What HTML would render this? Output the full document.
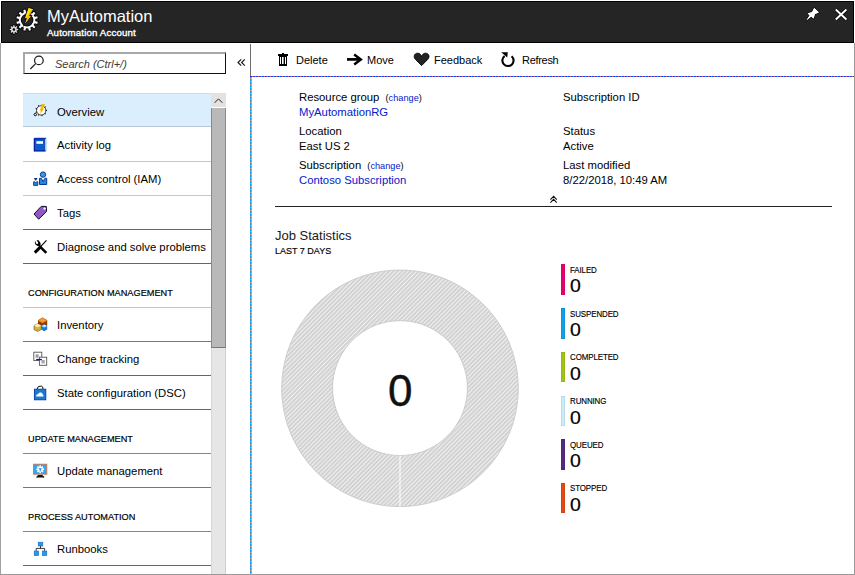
<!DOCTYPE html>
<html><head><meta charset="utf-8">
<style>
*{box-sizing:border-box;margin:0;padding:0}
html,body{width:855px;height:575px;overflow:hidden;background:#fff}
body{position:relative;font-family:"Liberation Sans",sans-serif;color:#000}
.a{position:absolute;white-space:nowrap}
#hdr{position:absolute;left:1px;top:1px;width:853px;height:42px;background:#252525;border:1px solid #000}
#lb{position:absolute;left:0;top:43px;width:1px;height:532px;background:#a0a0a0}
#rb{position:absolute;left:854px;top:43px;width:1px;height:532px;background:#9a9a9a}
#bb{position:absolute;left:0;top:574px;width:855px;height:1px;background:#9a9a9a}
.nav{position:absolute;left:23px;width:188px;height:35px;border-bottom:1px solid #c8c8c8}
.nav .t{position:absolute;left:34px;top:12px;font-size:11.3px}
.sec{position:absolute;left:28px;font-size:9.2px;-webkit-text-stroke:0.18px #000}
.lbl{font-size:11.3px}
.lnk{color:#0420cc}
.cmd{position:absolute;top:54px;font-size:11px}
.lg{position:absolute;left:560px;width:60px;height:31px}
.lg .bar{position:absolute;left:0.5px;top:0;width:4px;height:30.5px;box-shadow:inset 0 0 0 0.5px rgba(0,0,0,0.12)}
.lg .n{position:absolute;left:10px;top:0.5px;font-size:8.8px;letter-spacing:-0.1px;-webkit-text-stroke:0.15px #000;transform:scaleX(0.9);transform-origin:0 0}
.lg .v{position:absolute;left:9.5px;top:12px;font-size:18px;-webkit-text-stroke:0.2px #000;transform:scaleX(1.08);transform-origin:0 0}
</style></head><body>
<div id="hdr"></div>
<div id="lb"></div><div id="rb"></div><div id="bb"></div>

<div class="a" style="left:47px;top:7px;font-size:16.5px;color:#fff">MyAutomation</div>
<div class="a" style="left:47px;top:26.8px;font-size:9.7px;letter-spacing:0.15px;-webkit-text-stroke:0.35px #fff;color:#fff">Automation Account</div>

<div style="position:absolute;left:23px;top:52px;width:203px;height:22px;border:1px solid #111;border-top:2px solid #a8a8a8;border-left:2px solid #a8a8a8"></div>
<div class="a" style="left:55px;top:57.5px;font-size:11px;font-style:italic;color:#3a3a3a">Search (Ctrl+/)</div>

<div style="position:absolute;left:250px;top:44px;width:1px;height:32px;background:#6e6e6e"></div>

<div class="nav" style="top:93px;height:34px;background:#dbeefe;border-top:1px solid #bfe0fb;border-bottom-color:#b8c6d4"><div class="t">Overview</div></div>
<div class="nav" style="top:127px"><div class="t">Activity log</div></div>
<div class="nav" style="top:161px"><div class="t">Access control (IAM)</div></div>
<div class="nav" style="top:195px;border-bottom-color:#666"><div class="t">Tags</div></div>
<div class="nav" style="top:229px;border-bottom-color:#666"><div class="t">Diagnose and solve problems</div></div>
<div class="sec" style="top:288px">CONFIGURATION MANAGEMENT</div>
<div class="nav" style="top:307px;border-bottom-color:#777"><div class="t">Inventory</div></div>
<div style="position:absolute;left:23px;top:307px;width:188px;height:1px;background:#c4c4c4"></div>
<div class="nav" style="top:341px;border-bottom-color:#666"><div class="t">Change tracking</div></div>
<div class="nav" style="top:375px;border-bottom-color:#666"><div class="t">State configuration (DSC)</div></div>
<div class="sec" style="top:434px">UPDATE MANAGEMENT</div>
<div class="nav" style="top:453px;border-bottom-color:#777"><div class="t">Update management</div></div>
<div style="position:absolute;left:23px;top:453px;width:188px;height:1px;background:#888"></div>
<div class="sec" style="top:512px">PROCESS AUTOMATION</div>
<div class="nav" style="top:531px;border-bottom-color:#666"><div class="t">Runbooks</div></div>
<div style="position:absolute;left:23px;top:531px;width:188px;height:1px;background:#888"></div>

<div style="position:absolute;left:211px;top:93px;width:15px;height:481px;background:#e6e6e6;border-left:1px solid #d8d8d8;border-right:1px solid #d0d0d0"></div>
<div style="position:absolute;left:211px;top:93px;width:15px;height:15px;background:#e2e2e2"></div>
<div style="position:absolute;left:211px;top:107px;width:15px;height:1px;background:#fff"></div>
<div style="position:absolute;left:211px;top:108px;width:15px;height:240px;background:#b9b9b9;border-left:1px solid #8a8a8a;border-right:1px solid #8a8a8a;border-bottom:1px solid #777"></div>

<svg style="position:absolute;left:0;top:0" width="855" height="575"><line x1="250.8" y1="76" x2="250.8" y2="574" stroke="#f58a50" stroke-width="1.5"/><line x1="250.8" y1="76" x2="250.8" y2="574" stroke="#00a0ff" stroke-width="1.5" stroke-dasharray="2.2 0.8"/><line x1="250" y1="76.5" x2="854" y2="76.5" stroke="#e87048" stroke-width="1"/><line x1="250" y1="76.5" x2="854" y2="76.5" stroke="#1040f0" stroke-width="1" stroke-dasharray="2.2 0.8"/></svg>

<div class="cmd" style="left:296px">Delete</div>
<div class="cmd" style="left:367px">Move</div>
<div class="cmd" style="left:434px">Feedback</div>
<div class="cmd" style="left:522px;letter-spacing:-0.3px">Refresh</div>

<div class="a lbl" style="left:299px;top:91px">Resource group <span style="font-size:9.2px;margin-left:3px">(<span class="lnk">change</span>)</span></div>
<div class="a lbl lnk" style="left:299px;top:106px">MyAutomationRG</div>
<div class="a lbl" style="left:299px;top:125px">Location</div>
<div class="a lbl" style="left:299px;top:140px">East US 2</div>
<div class="a lbl" style="left:299px;top:159px">Subscription <span style="font-size:9.2px;margin-left:3px">(<span class="lnk">change</span>)</span></div>
<div class="a lbl lnk" style="left:299px;top:174px">Contoso Subscription</div>
<div class="a lbl" style="left:563px;top:91px">Subscription ID</div>
<div class="a lbl" style="left:563px;top:125px">Status</div>
<div class="a lbl" style="left:563px;top:140px">Active</div>
<div class="a lbl" style="left:563px;top:159px">Last modified</div>
<div class="a lbl" style="left:563px;top:174px">8/22/2018, 10:49 AM</div>
<div style="position:absolute;left:275px;top:206px;width:557px;height:1px;background:#222"></div>

<div class="a" style="left:275px;top:228px;font-size:13px;color:#1a1a1a">Job Statistics</div>
<div class="a" style="left:275px;top:246px;font-size:9px;-webkit-text-stroke:0.15px #000">LAST 7 DAYS</div>

<svg style="position:absolute;left:0;top:0" width="855" height="575">
<defs>
<pattern id="hatch" patternUnits="userSpaceOnUse" width="3" height="3" patternTransform="rotate(45)">
<rect width="3" height="3" fill="#d2d2d2"/><rect width="0.9" height="3" fill="#f4f4f4"/>
</pattern>
</defs>
<path fill="url(#hatch)" fill-rule="evenodd" stroke="#c4c4c4" stroke-width="0.8" d="M400,270 A118.3,118.3 0 1 1 399.99,270 Z M400,320.7 A67.4,67.4 0 1 0 400.01,320.7 Z"/>
<line x1="400" y1="455.5" x2="400" y2="506.5" stroke="#fff" stroke-width="1"/>
</svg>
<div class="a" style="left:388px;top:366px;font-size:44px;color:#111;-webkit-text-stroke:0.4px #111">0</div>

<div class="lg" style="top:264px"><div class="bar" style="background:#e8006f"></div><div class="n">FAILED</div><div class="v">0</div></div>
<div class="lg" style="top:308px"><div class="bar" style="background:#0fa0e8"></div><div class="n">SUSPENDED</div><div class="v">0</div></div>
<div class="lg" style="top:351.6px"><div class="bar" style="background:#a0c40f"></div><div class="n">COMPLETED</div><div class="v">0</div></div>
<div class="lg" style="top:395.5px"><div class="bar" style="background:#c8ecfa"></div><div class="n">RUNNING</div><div class="v">0</div></div>
<div class="lg" style="top:439px"><div class="bar" style="background:#552a7f"></div><div class="n">QUEUED</div><div class="v">0</div></div>
<div class="lg" style="top:482.5px"><div class="bar" style="background:#e24a12"></div><div class="n">STOPPED</div><div class="v">0</div></div>

<svg style="position:absolute;left:0;top:0" width="855" height="575">
<!-- header icon -->
<g fill="#000" stroke="#000" stroke-width="1.4"><rect x="-1.15" y="-10.90" width="2.30" height="3.50" transform="translate(27.1,20.1) rotate(15.0)"/><rect x="-1.15" y="-10.90" width="2.30" height="3.50" transform="translate(27.1,20.1) rotate(45.0)"/><rect x="-1.15" y="-10.90" width="2.30" height="3.50" transform="translate(27.1,20.1) rotate(75.0)"/><rect x="-1.15" y="-10.90" width="2.30" height="3.50" transform="translate(27.1,20.1) rotate(105.0)"/><rect x="-1.15" y="-10.90" width="2.30" height="3.50" transform="translate(27.1,20.1) rotate(135.0)"/><rect x="-1.15" y="-10.90" width="2.30" height="3.50" transform="translate(27.1,20.1) rotate(165.0)"/><rect x="-1.15" y="-10.90" width="2.30" height="3.50" transform="translate(27.1,20.1) rotate(195.0)"/><rect x="-1.15" y="-10.90" width="2.30" height="3.50" transform="translate(27.1,20.1) rotate(225.0)"/><rect x="-1.15" y="-10.90" width="2.30" height="3.50" transform="translate(27.1,20.1) rotate(255.0)"/><rect x="-1.15" y="-10.90" width="2.30" height="3.50" transform="translate(27.1,20.1) rotate(285.0)"/><rect x="-1.15" y="-10.90" width="2.30" height="3.50" transform="translate(27.1,20.1) rotate(315.0)"/><rect x="-1.15" y="-10.90" width="2.30" height="3.50" transform="translate(27.1,20.1) rotate(345.0)"/></g>
<circle cx="27.1" cy="20.1" r="7.3" fill="none" stroke="#000" stroke-width="3.6"/>
<circle cx="27.1" cy="20.1" r="7.3" fill="none" stroke="#fafafa" stroke-width="2"/>
<g fill="#fafafa"><rect x="-1.10" y="-10.80" width="2.20" height="3.40" transform="translate(27.1,20.1) rotate(15.0)"/><rect x="-1.10" y="-10.80" width="2.20" height="3.40" transform="translate(27.1,20.1) rotate(45.0)"/><rect x="-1.10" y="-10.80" width="2.20" height="3.40" transform="translate(27.1,20.1) rotate(75.0)"/><rect x="-1.10" y="-10.80" width="2.20" height="3.40" transform="translate(27.1,20.1) rotate(105.0)"/><rect x="-1.10" y="-10.80" width="2.20" height="3.40" transform="translate(27.1,20.1) rotate(135.0)"/><rect x="-1.10" y="-10.80" width="2.20" height="3.40" transform="translate(27.1,20.1) rotate(165.0)"/><rect x="-1.10" y="-10.80" width="2.20" height="3.40" transform="translate(27.1,20.1) rotate(195.0)"/><rect x="-1.10" y="-10.80" width="2.20" height="3.40" transform="translate(27.1,20.1) rotate(225.0)"/><rect x="-1.10" y="-10.80" width="2.20" height="3.40" transform="translate(27.1,20.1) rotate(255.0)"/><rect x="-1.10" y="-10.80" width="2.20" height="3.40" transform="translate(27.1,20.1) rotate(285.0)"/><rect x="-1.10" y="-10.80" width="2.20" height="3.40" transform="translate(27.1,20.1) rotate(315.0)"/><rect x="-1.10" y="-10.80" width="2.20" height="3.40" transform="translate(27.1,20.1) rotate(345.0)"/></g>
<g fill="#000" stroke="#000" stroke-width="1.2"><rect x="-0.75" y="-4.40" width="1.50" height="2.60" transform="translate(13.9,29.5) rotate(0.0)"/><rect x="-0.75" y="-4.40" width="1.50" height="2.60" transform="translate(13.9,29.5) rotate(45.0)"/><rect x="-0.75" y="-4.40" width="1.50" height="2.60" transform="translate(13.9,29.5) rotate(90.0)"/><rect x="-0.75" y="-4.40" width="1.50" height="2.60" transform="translate(13.9,29.5) rotate(135.0)"/><rect x="-0.75" y="-4.40" width="1.50" height="2.60" transform="translate(13.9,29.5) rotate(180.0)"/><rect x="-0.75" y="-4.40" width="1.50" height="2.60" transform="translate(13.9,29.5) rotate(225.0)"/><rect x="-0.75" y="-4.40" width="1.50" height="2.60" transform="translate(13.9,29.5) rotate(270.0)"/><rect x="-0.75" y="-4.40" width="1.50" height="2.60" transform="translate(13.9,29.5) rotate(315.0)"/></g>
<circle cx="13.9" cy="29.5" r="2.2" fill="#000" stroke="#000" stroke-width="2.4"/>
<circle cx="13.9" cy="29.5" r="2.1" fill="none" stroke="#d8d8d8" stroke-width="1.6"/>
<g fill="#d8d8d8"><rect x="-0.70" y="-4.30" width="1.40" height="2.50" transform="translate(13.9,29.5) rotate(0.0)"/><rect x="-0.70" y="-4.30" width="1.40" height="2.50" transform="translate(13.9,29.5) rotate(45.0)"/><rect x="-0.70" y="-4.30" width="1.40" height="2.50" transform="translate(13.9,29.5) rotate(90.0)"/><rect x="-0.70" y="-4.30" width="1.40" height="2.50" transform="translate(13.9,29.5) rotate(135.0)"/><rect x="-0.70" y="-4.30" width="1.40" height="2.50" transform="translate(13.9,29.5) rotate(180.0)"/><rect x="-0.70" y="-4.30" width="1.40" height="2.50" transform="translate(13.9,29.5) rotate(225.0)"/><rect x="-0.70" y="-4.30" width="1.40" height="2.50" transform="translate(13.9,29.5) rotate(270.0)"/><rect x="-0.70" y="-4.30" width="1.40" height="2.50" transform="translate(13.9,29.5) rotate(315.0)"/></g>
<polygon points="28.2,7.4 33.8,8.8 29.6,15.6 32,15.3 23.6,26.2 26.4,18.4 24.2,19" fill="#ffe600" stroke="#0a0a30" stroke-width="1" stroke-linejoin="miter"/>
<polygon points="31.2,9.8 32.4,10.2 28.4,16.6 30.4,16.4 25.4,23.2 27.8,17.2 26.6,17.4" fill="#f8b000"/>
<!-- pin -->
<polygon points="814.2,8 818.9,12.6 814.9,14 813.6,18.6 811.2,16.6 806.3,20.6 809.6,15.6 807.6,13.3 812,12.2" fill="#fff" stroke="#000" stroke-width="1.3" stroke-linejoin="round" paint-order="stroke"/>
<polygon points="814.2,8 818.9,12.6 814.9,14 813.6,18.6 811.2,16.6 806.3,20.6 809.6,15.6 807.6,13.3 812,12.2" fill="#fff"/>
<!-- close -->
<path d="M835.8,9.4 L846.4,19.4 M846.4,9.4 L835.8,19.4" stroke="#000" stroke-width="3.4"/>
<path d="M835.8,9.4 L846.4,19.4 M846.4,9.4 L835.8,19.4" stroke="#fff" stroke-width="2"/>
<!-- search -->
<circle cx="38.9" cy="60.4" r="4.3" fill="none" stroke="#1a1a1a" stroke-width="1.2"/>
<path d="M35.6,63.6 L30.4,69" stroke="#1a1a1a" stroke-width="1.2"/>
<!-- collapse « -->
<path d="M241.2,59.3 L238,62.5 L241.2,65.7 M244.8,59.3 L241.6,62.5 L244.8,65.7" fill="none" stroke="#1a1a1a" stroke-width="1.2"/>
<!-- scroll up arrow -->
<path d="M214.6,102.8 L218.5,98.9 L222.4,102.8" fill="none" stroke="#222" stroke-width="1"/>
<!-- overview icon -->
<circle cx="41.2" cy="110.4" r="4.7" fill="#fff" stroke="#333" stroke-width="0.9"/>
<g fill="#2a2a2a"><rect x="-0.55" y="-5.90" width="1.10" height="1.50" transform="translate(41.2,110.4) rotate(10.0)"/><rect x="-0.55" y="-5.90" width="1.10" height="1.50" transform="translate(41.2,110.4) rotate(50.0)"/><rect x="-0.55" y="-5.90" width="1.10" height="1.50" transform="translate(41.2,110.4) rotate(90.0)"/><rect x="-0.55" y="-5.90" width="1.10" height="1.50" transform="translate(41.2,110.4) rotate(130.0)"/><rect x="-0.55" y="-5.90" width="1.10" height="1.50" transform="translate(41.2,110.4) rotate(170.0)"/><rect x="-0.55" y="-5.90" width="1.10" height="1.50" transform="translate(41.2,110.4) rotate(210.0)"/><rect x="-0.55" y="-5.90" width="1.10" height="1.50" transform="translate(41.2,110.4) rotate(250.0)"/><rect x="-0.55" y="-5.90" width="1.10" height="1.50" transform="translate(41.2,110.4) rotate(290.0)"/><rect x="-0.55" y="-5.90" width="1.10" height="1.50" transform="translate(41.2,110.4) rotate(330.0)"/></g>
<polygon points="41.8,104.2 45.2,104.2 42.6,108.4 44.4,108.2 40,114.6 41,110.6 39.6,110.8" fill="#ffc000"/>
<polygon points="43.4,104.6 44.4,104.6 41.8,109 43,108.8 40.6,112.6 41.4,110" fill="#ff8a00"/>
<circle cx="35.3" cy="114.6" r="1.2" fill="none" stroke="#111" stroke-width="1"/>
<!-- activity log -->
<rect x="34.3" y="137.6" width="12" height="13.4" fill="#3aa0ff"/>
<rect x="34.3" y="138.8" width="10.8" height="12.2" fill="#0a5cc8" stroke="#0010a0" stroke-width="1.1"/>
<rect x="44.9" y="139" width="0.9" height="11.5" fill="#f5f0a0"/>
<rect x="36.4" y="141.2" width="6.6" height="2.6" fill="#fff"/>
<!-- IAM -->
<circle cx="43" cy="174.6" r="2.7" fill="#3a98dc" stroke="#0a3a98" stroke-width="1"/>
<path d="M39.5,178.3 L41.3,178.3 L43.1,181.6 L44.9,178.3 L46.7,178.3 L46.7,184.5 L39.5,184.5 Z" fill="#2a88d0" stroke="#0a3a98" stroke-width="1"/>
<path d="M34.4,178.5 L37,178.5 L35.7,180.3 Z" fill="#0a2a88" stroke="#0a2a88" stroke-width="0.9"/>
<path d="M33.6,181.8 L34.8,181.8 L35.7,183 L36.6,181.8 L37.8,181.8 L37.8,185.4 L33.6,185.4 Z" fill="#2a88d0" stroke="#0a3a98" stroke-width="0.9"/>
<!-- tag -->
<path d="M34,214 L41.2,206.4 L46.3,206.4 L46.6,211.4 L38.7,219.2 Z" fill="#9058c4" stroke="#1a0a30" stroke-width="1"/>
<circle cx="44.6" cy="208.6" r="1.2" fill="#fff"/>
<!-- diagnose -->
<path d="M40.3,246.8 L46.3,252.8" stroke="#000" stroke-width="2.6"/>
<path d="M35,240.6 Q33.8,245.8 39.6,246.4 L40.6,245.8 Q40.8,242.2 38.6,240.3 L36.5,240.3 L38.2,242.4 L37.8,244 L36.2,243.8 Z" fill="#000"/>
<path d="M46.5,240.4 L40.6,246.6" stroke="#000" stroke-width="1.1"/>
<path d="M41,246.4 L34.8,252.6" stroke="#000" stroke-width="2.9"/>
<!-- inventory -->
<path d="M38,320.5 L42.5,317.8 L47.2,320.5 L47.2,326 L42.5,328.5 L38,326 Z" fill="#8a3a10"/>
<path d="M38,320.5 L42.5,317.8 L47.2,320.5 L42.5,323 Z" fill="#f0a030" stroke="#d86010" stroke-width="0.6"/>
<path d="M34,325.5 L37.5,323.8 L41.3,325.5 L41.3,329.6 L37.5,331.4 L34,329.6 Z" fill="#d8b040" stroke="#6a4a10" stroke-width="0.6"/>
<path d="M34,325.5 L37.5,323.8 L41.3,325.5 L37.5,327.2 Z" fill="#fff4b0"/>
<path d="M41.3,326 L44.2,324.4 L47.2,326 L47.2,329.6 L44.2,331.2 L41.3,329.6 Z" fill="#1a78d8"/>
<path d="M41.3,326 L44.2,324.4 L47.2,326 L44.2,327.6 Z" fill="#c0ecff"/>
<!-- change tracking -->
<rect x="33.8" y="352.2" width="8" height="8.3" fill="#fff" stroke="#555" stroke-width="0.9"/>
<rect x="35.6" y="354.4" width="3" height="3.2" fill="#999"/>
<rect x="39.4" y="357.2" width="7.3" height="8.1" fill="#fff" stroke="#555" stroke-width="0.9"/>
<rect x="41.4" y="360" width="3.4" height="3.4" fill="#aaa"/>
<rect x="36.2" y="358.9" width="5.6" height="1.3" fill="#0010c0"/>
<!-- state config bag -->
<path d="M37.2,389 Q37.4,386.2 40,386.2 L41.8,386.2 Q43,386.4 43,389" fill="none" stroke="#111" stroke-width="1"/>
<rect x="34.4" y="389.2" width="11.4" height="10.6" fill="#1a7ad0" stroke="#0a3aa0" stroke-width="0.9"/>
<path d="M36.2,396.6 Q35.8,394 38,394.2 Q38.8,392 41,392.6 Q42.8,393 42.6,394.6 Q43.8,394.8 43.4,396.6 Z" fill="#fff"/>
<!-- update mgmt -->
<rect x="33.6" y="464.2" width="13.2" height="10" fill="#30a8ec" stroke="#d0704a" stroke-width="0.9"/>
<circle cx="40.2" cy="469.3" r="2.7" fill="#fff"/>
<g fill="#fff"><rect x="-0.8" y="-3.9" width="1.6" height="1.6" transform="translate(40.2,469.3) rotate(0)"/><rect x="-0.8" y="-3.9" width="1.6" height="1.6" transform="translate(40.2,469.3) rotate(45)"/><rect x="-0.8" y="-3.9" width="1.6" height="1.6" transform="translate(40.2,469.3) rotate(90)"/><rect x="-0.8" y="-3.9" width="1.6" height="1.6" transform="translate(40.2,469.3) rotate(135)"/><rect x="-0.8" y="-3.9" width="1.6" height="1.6" transform="translate(40.2,469.3) rotate(180)"/><rect x="-0.8" y="-3.9" width="1.6" height="1.6" transform="translate(40.2,469.3) rotate(225)"/><rect x="-0.8" y="-3.9" width="1.6" height="1.6" transform="translate(40.2,469.3) rotate(270)"/><rect x="-0.8" y="-3.9" width="1.6" height="1.6" transform="translate(40.2,469.3) rotate(315)"/></g>
<rect x="38.8" y="468.4" width="2.8" height="0.9" fill="#1a78d8"/>
<rect x="39.7" y="468.4" width="1" height="3" fill="#1a78d8"/>
<path d="M36.5,477.4 L38.5,475.6 L42,475.6 L44.2,477.4" fill="#111" stroke="#111" stroke-width="1.1"/>
<!-- runbooks -->
<rect x="38.2" y="542.2" width="4.6" height="3.8" fill="#2a9ae6" stroke="#0a68c8" stroke-width="0.6"/>
<path d="M40.5,546 L40.5,548.4 M36.2,550.8 L36.2,548.4 L44.6,548.4 L44.6,550.8" fill="none" stroke="#222" stroke-width="0.9"/>
<rect x="34.2" y="551" width="4.4" height="4.6" fill="#2a9ae6" stroke="#0a68c8" stroke-width="0.6"/>
<rect x="42.4" y="551" width="4.4" height="4.6" fill="#2a9ae6" stroke="#0a68c8" stroke-width="0.6"/>
<!-- trash -->
<rect x="278" y="54" width="10" height="2" fill="#000"/>
<rect x="282" y="53" width="2" height="1.2" fill="#000"/>
<rect x="279" y="56" width="8" height="10" fill="#000"/>
<rect x="280" y="57" width="1" height="7" fill="#fff"/>
<rect x="282" y="57" width="1.6" height="7" fill="#fff"/>
<rect x="285" y="57" width="1" height="7" fill="#fff"/>
<!-- move arrow -->
<path d="M347,59.4 L359.5,59.4" stroke="#000" stroke-width="2.7"/>
<path d="M354.2,54.4 L360.8,59.4 L354.2,64.4" fill="none" stroke="#000" stroke-width="2.5"/>
<!-- heart -->
<path d="M421.6,65.6 L415.6,59.6 C413,57 414.2,53.2 417.6,53.2 C419.6,53.2 421,54.6 421.6,56.6 C422.2,54.6 423.6,53.2 425.6,53.2 C429,53.2 430.2,57 427.6,59.6 Z" fill="#222" stroke="#000" stroke-width="0.9"/>
<!-- refresh -->
<path d="M511.6,56.2 A5.6,5.6 0 1 1 504.6,56" fill="none" stroke="#000" stroke-width="2.1"/>
<polygon points="501.2,52.2 507.8,52.2 507.2,57.6" fill="#000"/>
<!-- collapse chevrons -->
<path d="M550.4,199.6 L553.6,196.4 L556.8,199.6 M550.4,202.6 L553.6,199.4 L556.8,202.6" fill="none" stroke="#111" stroke-width="1.1"/>
</svg>

</body></html>
